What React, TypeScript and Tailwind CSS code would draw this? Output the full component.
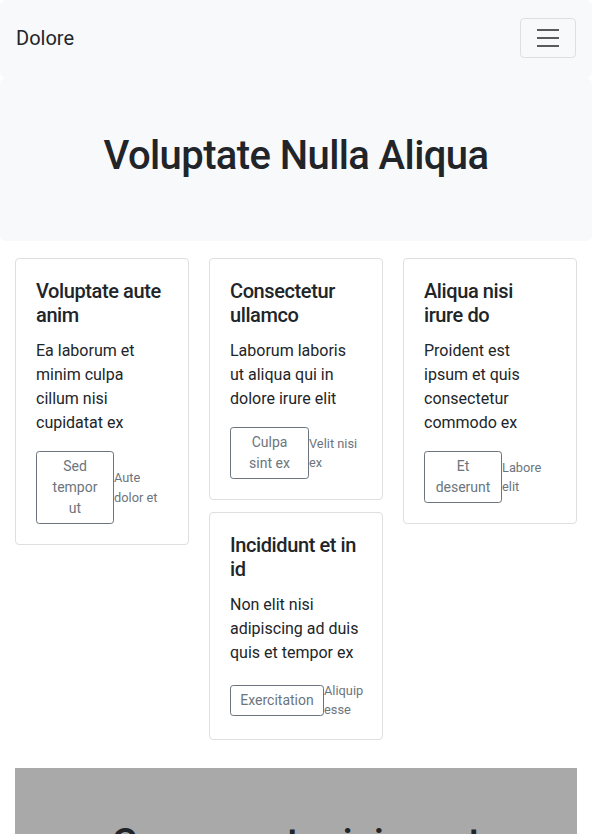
import React from "react";

type Card = {
  title: string;
  text: string;
  btn: string;
  btnW: string;
  small: string;
};

const col1: Card[] = [
  { title: "Voluptate aute anim", text: "Ea laborum et minim culpa cillum nisi cupidatat ex", btn: "Sed tempor ut", btnW: "w-[78px]", small: "Aute dolor et" },
];
const col2: Card[] = [
  { title: "Consectetur ullamco", text: "Laborum laboris ut aliqua qui in dolore irure elit", btn: "Culpa sint ex", btnW: "w-[79px]", small: "Velit nisi ex" },
  { title: "Incididunt et in id", text: "Non elit nisi adipiscing ad duis quis et tempor ex", btn: "Exercitation", btnW: "w-[94px]", small: "Aliquip esse" },
];
const col3: Card[] = [
  { title: "Aliqua nisi irure do", text: "Proident est ipsum et quis consectetur commodo ex", btn: "Et deserunt", btnW: "w-[78px]", small: "Labore elit" },
];

function CardView({ c }: { c: Card }) {
  return (
    <div className="rounded-[4px] border border-[#dfdfdf] bg-white p-5">
      <h5 className="mb-3 text-[20px] font-medium leading-[24px] tracking-[-0.4px] text-[#212529]">{c.title}</h5>
      <p className="mb-4 text-[16px] leading-[24px] text-[#212529]">{c.text}</p>
      <div className="flex items-center justify-between">
        <button
          className={`${c.btnW} shrink-0 rounded-[3.2px] border border-[#6c757d] px-2 py-1 text-center text-[14px] leading-[21px] text-[#6c757d]`}
        >
          {c.btn}
        </button>
        <small className="min-w-0 flex-1 text-[12.8px] leading-[19.2px] text-[#6c757d]">{c.small}</small>
      </div>
    </div>
  );
}

export default function App() {
  return (
    <div className="min-h-[834px] bg-white font-['Roboto','Liberation_Sans',sans-serif] text-[#212529]">
      <nav className="flex items-center justify-between rounded-[6px] bg-[#f8f9fa] pb-[20px] pl-4 pr-4 pt-[18px]">
        <span className="text-[20px] leading-[30px] text-[#212529]">Dolore</span>
        <button className="flex h-[40px] w-[56px] items-center justify-center rounded-[4px] border border-[rgba(0,0,0,0.1)]">
          <svg width="30" height="30" viewBox="0 0 30 30">
            <path d="M4 7h22M4 15h22M4 23h22" stroke="rgba(33,37,41,0.75)" strokeWidth="2" strokeLinecap="butt" />
          </svg>
        </button>
      </nav>
      <div className="rounded-[6px] bg-[#f8f9fa] pb-[61px] pt-[54px] text-center">
        <h1 className="text-[40px] font-medium leading-[48px] tracking-[-0.6px] text-[#212529]">Voluptate Nulla Aliqua</h1>
      </div>
      <div className="px-[15px]">
        <div className="mt-[17px] flex items-start gap-5">
          <div className="flex w-[174px] flex-col gap-3">
            {col1.map((c) => (
              <CardView key={c.title} c={c} />
            ))}
          </div>
          <div className="flex w-[174px] flex-col gap-3">
            {col2.map((c) => (
              <CardView key={c.title} c={c} />
            ))}
          </div>
          <div className="flex w-[174px] flex-col gap-3">
            {col3.map((c) => (
              <CardView key={c.title} c={c} />
            ))}
          </div>
        </div>
        <div className="mt-7 bg-[#a9a9a9] pb-12 pt-[52px] text-center">
          <h2 className="text-[40px] font-medium leading-[48px] tracking-[-0.6px] text-[#212529]">Consequat minim est</h2>
        </div>
      </div>
    </div>
  );
}
